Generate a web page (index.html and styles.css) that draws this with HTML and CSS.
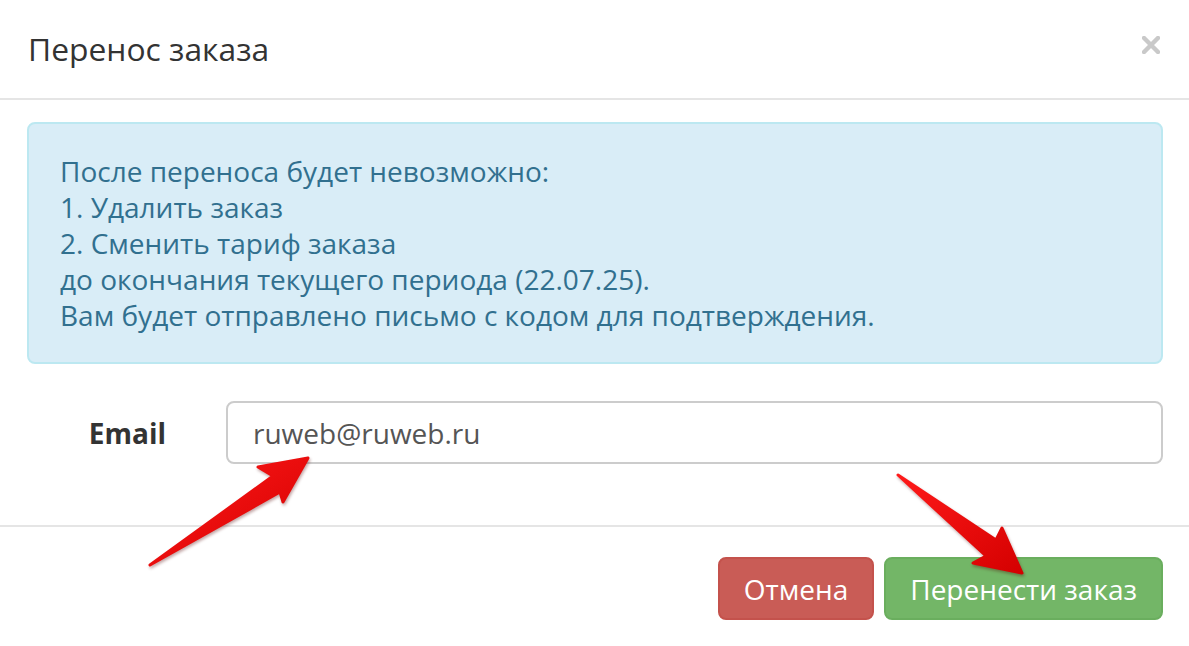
FILE: index.html
```html
<!doctype html>
<html lang="ru">
  <head>
    <meta charset="UTF-8" />
    <meta name="viewport" content="width=device-width, initial-scale=1.0" />
    <title>Перенос заказа</title>
    <link rel="stylesheet" href="styles.css">
  </head>
  <body>
    <div class="modal">
      <div class="modal-header">
        <h4 class="modal-title">Перенос заказа</h4>
        <button class="close" type="button" aria-label="Закрыть">
          <svg width="18" height="18" viewBox="0 0 18 18">
            <path d="M2 2 L16 16 M16 2 L2 16" stroke="#c9c9c9" stroke-width="4.4" stroke-linecap="square" />
          </svg>
        </button>
      </div>

      <div class="modal-body">
        <div class="alert">
          После переноса будет невозможно:<br />
          1. Удалить заказ<br />
          2. Сменить тариф заказа<br />
          до окончания текущего периода (22.07.25).<br />
          Вам будет отправлено письмо с кодом для подтверждения.
        </div>

        <div class="form-row">
          <label class="form-label" for="email">Email</label>
          <input class="form-input" id="email" type="text" value="ruweb@ruweb.ru" />
        </div>
      </div>

      <div class="modal-footer">
        <button class="btn btn-danger" type="button">Отмена</button>
        <button class="btn btn-success" type="button">Перенести заказ</button>
      </div>

      <!-- pointer arrows drawn over the form -->
      <svg class="arrows" width="1189" height="646" viewBox="0 0 1189 646">
        <defs>
          <linearGradient id="arrowFill" x1="0" y1="0" x2="1" y2="1">
            <stop offset="0%" stop-color="#ff1a1a" />
            <stop offset="100%" stop-color="#d40000" />
          </linearGradient>
        </defs>
        <polygon class="arrow" points="150,565 273,476 258,467 308,458 283,502 280,492" />
        <polygon class="arrow" points="898,475 996,540 1002,528 1022,573 973,563 986,556" />
      </svg>
    </div>
  </body>
</html>
```

FILE: styles.css
```css
body {
  margin: 0;
  background: #fff;
  font-family: "Open Sans", "Noto Sans", sans-serif;
  color: #333;
}

.modal {
  position: relative;
  width: 1189px;
  height: 646px;
  overflow: hidden;
}

.modal-header {
  display: flex;
  align-items: center;
  justify-content: space-between;
  height: 98px;
  padding: 0 29px 0 28px;
  border-bottom: 2px solid #e5e5e5;
  box-sizing: content-box;
}

.modal-title {
  margin: 0;
  font-size: 31.8px;
  font-weight: 400;
  line-height: 50px;
  color: #333;
}

.close {
  display: flex;
  padding: 0;
  margin-top: -8px;
  border: none;
  background: none;
  cursor: pointer;
}

.modal-body {
  padding: 22px 26px 0 27px;
}

.alert {
  padding: 29px 31px;
  border: 2px solid #bce8f1;
  border-radius: 8px;
  background: #d9edf7;
  color: #31708f;
  font-size: 28px;
  line-height: 36px;
}

.form-row {
  display: flex;
  align-items: center;
  margin-top: 37px;
  padding-bottom: 61px;
}

.form-label {
  flex: 0 0 199px;
  box-sizing: border-box;
  padding-right: 60px;
  text-align: right;
  font-size: 28px;
  font-weight: 700;
  color: #333;
}

.form-input {
  flex: 1;
  height: 63px;
  box-sizing: border-box;
  padding: 0 25px;
  border: 2px solid #ccc;
  border-radius: 8px;
  font-family: inherit;
  font-size: 28px;
  color: #555;
  outline: none;
}

.modal-footer {
  display: flex;
  justify-content: flex-end;
  gap: 10px;
  padding: 30px 26px 0 0;
  border-top: 2px solid #e5e5e5;
}

.btn {
  height: 63px;
  padding: 0 24px;
  border: 2px solid transparent;
  border-radius: 8px;
  font-family: inherit;
  font-size: 28px;
  color: #fff;
  cursor: pointer;
}

.btn-danger {
  background: #c95c56;
  border-color: #c4524c;
}

.btn-success {
  background: #73b667;
  border-color: #6aae5e;
}

.arrows {
  position: absolute;
  top: 0;
  left: 0;
  pointer-events: none;
  filter: drop-shadow(1px 2px 1.5px rgba(80, 0, 0, 0.35));
}

.arrow {
  fill: url(#arrowFill);
  stroke: url(#arrowFill);
  stroke-width: 3;
  stroke-linejoin: round;
}
```
